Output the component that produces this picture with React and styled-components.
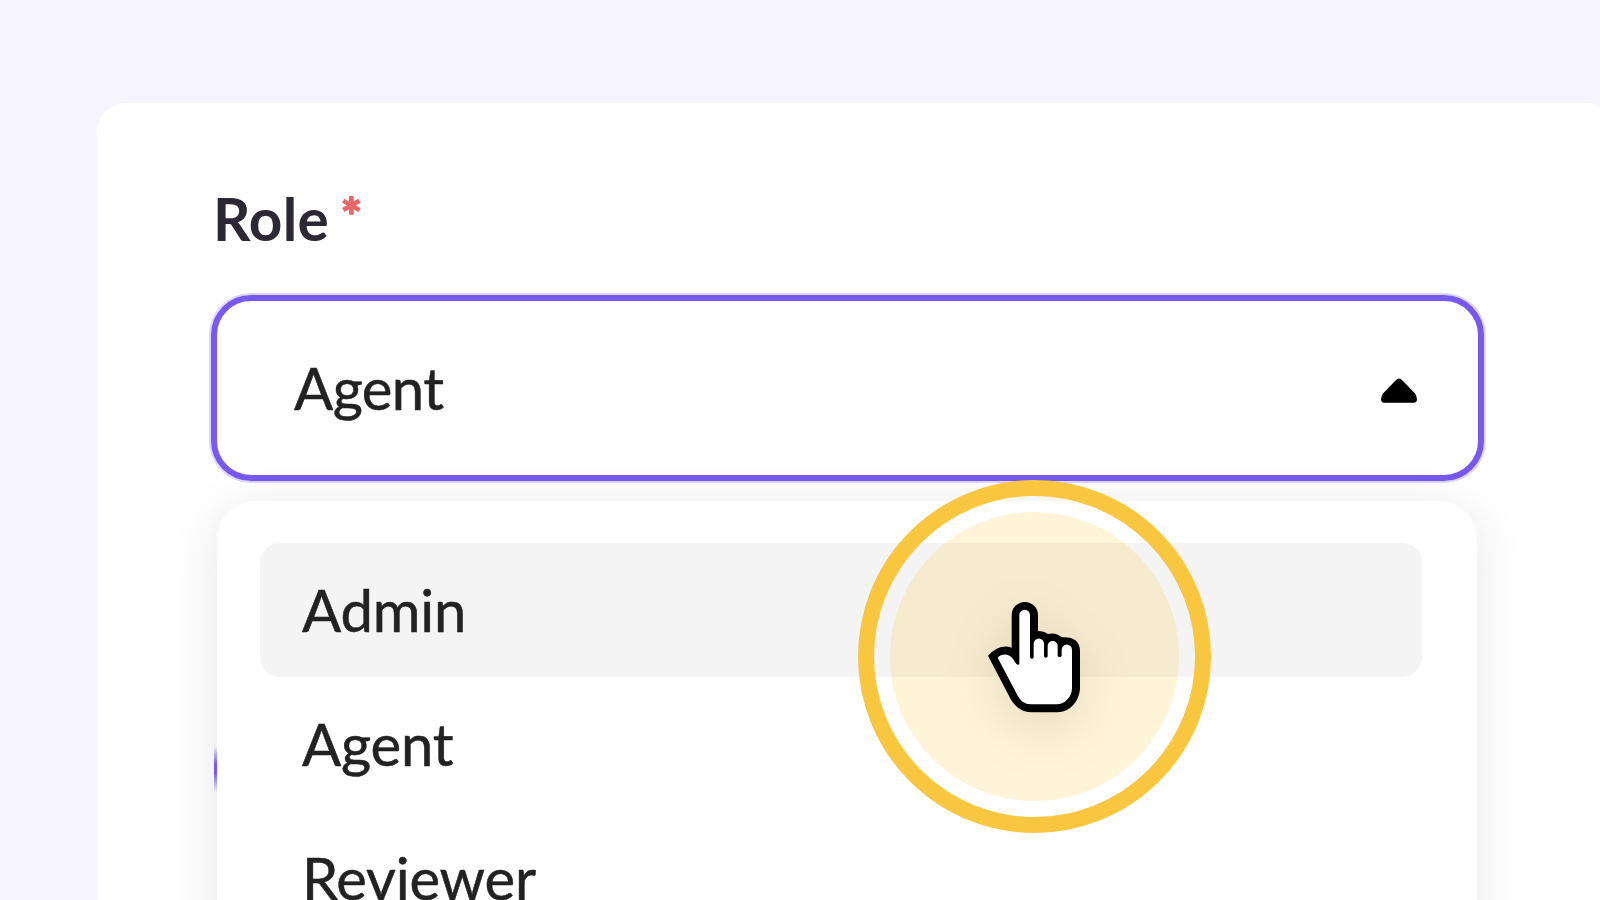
import styled, { createGlobalStyle } from 'styled-components';

const roles = ['Admin', 'Agent', 'Reviewer'];

const App = () => {
  return (
    <Screen>
      <GlobalStyle />
      <Card>
        <Label>
          <span>Role</span>
          <Required>*</Required>
        </Label>
        <Select>
          <Value>Agent</Value>
          <Caret viewBox="0 0 40 28">
            <path d="M16.5 3.5Q20 -0.5 23.5 3.5L36.500 17Q40 25.500 35 25.800H5Q0 25.500 3.500 17Z" />
          </Caret>
        </Select>
        <Menu>
          {roles.map((role) => (
            <Option key={role} $active={role === 'Admin'}>
              {role}
            </Option>
          ))}
        </Menu>
        <RadioEdge />
      </Card>
      <Pointer />
    </Screen>
  );
};

const Pointer = () => (
  <Ring>
    <Halo>
      <Hand viewBox="0 0 450 450">
        <path d="M155 105A39.5 39 0 0 1 234 105V153Q252 153 264 162Q287 156 306 172Q358 169 360 212V325C358 364 331 396 292 397H214C186 395 168 383 153 359L84 227Q120 190 155 203Z" />
        <path
          fill="#fff"
          d="M178 105a16 16 0 0 1 32 0V231a5.500 5 0 0 0 11 0V191a15.500 15.500 0 0 1 31 0V229a5.500 4 0 0 0 11 0V198a15 15 0 0 1 30 0V227a6 4 0 0 0 12 0V209a15.500 15.500 0 0 1 31 0V325C336 350 315 373 290 373H212C195 372 184 366 174 349L113 233C126 218 149 221 159 237L167 249Q171 256 178 253Z"
        />
      </Hand>
    </Halo>
  </Ring>
);

const GlobalStyle = createGlobalStyle`
  * {
    box-sizing: border-box;
  }
  body {
    margin: 0;
    font-family: Lato, sans-serif;
  }
`;

const Screen = styled.div`
  position: relative;
  width: 1600px;
  height: 900px;
  overflow: hidden;
  padding: 103px 0 0 97px;
  background: #f5f4ff;
`;

const Card = styled.div`
  position: relative;
  width: 1520px;
  height: 900px;
  padding: 78px 0 0 114px;
  border-radius: 29px;
  background: #fff;
`;

const Label = styled.div`
  display: flex;
  align-items: flex-start;
  gap: 12px;
  height: 114px;
  padding-left: 2px;
  font-size: 58.5px;
  font-weight: 700;
  line-height: 74px;
  letter-spacing: 0.2px;
  color: #2c2934;
`;

const Required = styled.span`
  font-size: 50px;
  font-weight: 900;
  line-height: 71px;
  color: #e86868;
  -webkit-text-stroke: 1.4px #e86868;
`;

const Select = styled.div`
  display: flex;
  justify-content: space-between;
  align-items: center;
  width: 1273px;
  height: 186px;
  padding: 0 59px 0 77px;
  border: 6.5px solid #7759f2;
  border-radius: 40px;
  box-shadow: 0 0 0 2px #ddd5fc;
`;

const Value = styled.span`
  font-size: 58px;
  line-height: 74px;
  letter-spacing: -0.6px;
  color: #222;
  -webkit-text-stroke: 0.5px #222;
`;

const Caret = styled.svg`
  width: 40px;
  height: 28px;
  margin-top: 5px;
`;

const Menu = styled.div`
  position: relative;
  z-index: 1;
  width: 1260px;
  height: 500px;
  margin: 20px 0 0 6px;
  padding: 42px 55px 0 43px;
  border-radius: 38px;
  background: #fff;
  box-shadow: 0 8px 50px rgba(0, 0, 0, 0.1);
`;

const Option = styled.div`
  height: 134px;
  padding-left: 42px;
  border-radius: 20px;
  font-size: 58px;
  line-height: 134px;
  letter-spacing: -0.2px;
  color: #222;
  -webkit-text-stroke: 0.5px #222;
  background: ${({ $active }) => ($active ? '#f4f4f4' : 'transparent')};
`;

/* Edge of the selected radio that peeks out beside the open menu */
const RadioEdge = styled.div`
  position: absolute;
  z-index: 2;
  left: 117px;
  top: 643px;
  width: 3px;
  height: 46px;
  background: linear-gradient(#7759f200, #7759f2 40%, #7759f2 60%, #7759f200);
`;

const Ring = styled.div`
  position: absolute;
  z-index: 3;
  left: 858px;
  top: 480px;
  width: 353px;
  height: 353px;
  padding: 16px;
  border: 16px solid #f8c63f;
  border-radius: 50%;
`;

const Halo = styled.div`
  width: 289px;
  height: 289px;
  padding: 68px 0 0 70px;
  border-radius: 50%;
  overflow: hidden;
  background: rgba(255, 200, 55, 0.2);
`;

const Hand = styled.svg`
  display: block;
  width: 150px;
  height: 150px;
  overflow: visible;
  filter: drop-shadow(0 16px 26px rgba(0, 0, 0, 0.1));
`;

export default App;
